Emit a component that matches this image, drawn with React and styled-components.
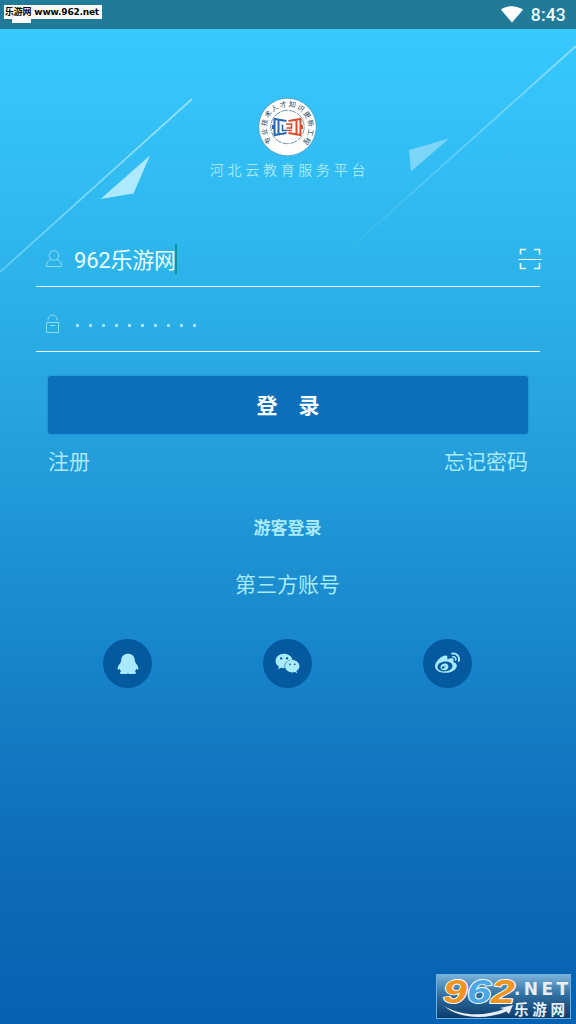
import styled, { createGlobalStyle, ThemeProvider } from "styled-components";
import { FaWeibo, FaWeixin } from "react-icons/fa";

const theme = {
  colors: {
    status: "#217a98",
    white: "#ffffff",
    text: "#e9fcff",
    pale: "#a9eaff",
    button: "#0b6fbb",
    circle: "#055a9f",
    cursor: "#07979b",
  },
  fonts: {
    main: 'Roboto, "Noto Sans CJK SC", sans-serif',
  },
};

const GlobalStyle = createGlobalStyle`
  * {
    box-sizing: border-box;
  }
  body {
    margin: 0;
    font-family: ${theme.fonts.main};
  }
`;

const Screen = styled.div`
  position: relative;
  display: flex;
  flex-direction: column;
  width: 576px;
  height: 1024px;
  overflow: hidden;
  background: linear-gradient(
    #38c9fe 29px,
    #2db5eb 260px,
    #249fdc 450px,
    #1784c9 660px,
    #0c6ab7 880px,
    #0562b3 1024px
  );
`;

const Decor = styled.svg`
  position: absolute;
  top: 0;
  left: 0;
  width: 576px;
  height: 300px;
  pointer-events: none;
`;

const StatusBar = styled.header`
  position: relative;
  display: flex;
  justify-content: flex-end;
  align-items: center;
  gap: 8px;
  height: 29px;
  padding-right: 10px;
  background-color: ${(p) => p.theme.colors.status};
`;

const Clock = styled.span`
  font-size: 17.5px;
  font-weight: 500;
  line-height: 29px;
  padding-top: 1px;
  letter-spacing: 0.2px;
  color: ${(p) => p.theme.colors.text};
`;

const SiteTag = styled.div`
  position: absolute;
  top: 5px;
  left: 4px;
  width: 98px;
  height: 14px;
  padding-left: 1px;
  background-color: ${(p) => p.theme.colors.white};
  color: #000;
  font: bold 9px/15px "DejaVu Sans", "Noto Sans CJK SC", sans-serif;
  letter-spacing: -0.2px;
  white-space: nowrap;
  &::after {
    content: "";
    position: absolute;
    top: 14px;
    left: 8px;
    width: 19px;
    height: 4px;
    background-color: ${(p) => p.theme.colors.white};
  }
`;

const Brand = styled.div`
  position: relative;
  display: flex;
  flex-direction: column;
  align-items: center;
  height: 204px;
  padding-top: 68px;
`;

const BrandName = styled.h1`
  margin: 3px 0 0 3px;
  font-size: 14px;
  font-weight: 350;
  line-height: 20px;
  letter-spacing: 3.7px;
  color: ${(p) => p.theme.colors.pale};
`;

const FieldRow = styled.div`
  position: relative;
  display: flex;
  align-items: center;
  height: ${(p) => p.$height}px;
  margin: 0 36px;
  padding: ${(p) => p.$shift || 0}px 0 0 9px;
  border-bottom: 1px solid ${(p) => p.theme.colors.text};
`;

const FieldIcon = styled.svg`
  flex: none;
  width: 18px;
  height: 20px;
  margin-bottom: 1px;
  fill: none;
  stroke: #8bdcf8;
  stroke-width: 1;
`;

const FieldText = styled.span`
  margin-left: 11px;
  padding-top: 2px;
  font-size: 22px;
  line-height: 30px;
  letter-spacing: -0.2px;
  color: ${(p) => p.theme.colors.text};
`;

const Cursor = styled.i`
  width: 2px;
  height: 30px;
  margin: 0 0 1px -1px;
  background-color: ${(p) => p.theme.colors.cursor};
`;

const Dots = styled.span`
  display: flex;
  gap: 10px;
  margin: 3px 0 0 13px;
`;

const Dot = styled.i`
  width: 3px;
  height: 3px;
  border-radius: 1px;
  background-color: ${(p) => p.theme.colors.pale};
`;

const ScanIcon = styled.svg`
  flex: none;
  width: 24px;
  height: 24px;
  margin: 0 -2px 2px auto;
  fill: none;
  stroke: ${(p) => p.theme.colors.text};
`;

const LoginBtn = styled.button`
  height: 58px;
  margin: 24px 48px 0;
  padding: 0 0 3px;
  border: none;
  border-radius: 3px;
  background-color: ${(p) => p.theme.colors.button};
  box-shadow: 0 0 2px rgba(0, 70, 120, 0.45);
  color: ${(p) => p.theme.colors.white};
  font-family: inherit;
  font-size: 21px;
  font-weight: 700;
`;

const Links = styled.div`
  display: flex;
  justify-content: space-between;
  margin: 13px 48px 0;
`;

const TextLink = styled.a`
  font-size: ${(p) => p.$size || 21}px;
  font-weight: ${(p) => (p.$bold ? 700 : 400)};
  line-height: 30px;
  color: ${(p) => p.theme.colors.pale};
`;

const Guest = styled.div`
  display: flex;
  flex-direction: column;
  align-items: center;
  gap: 27px;
  margin: 36px 1px 0 0;
`;

const Socials = styled.div`
  display: flex;
  justify-content: center;
  gap: 111px;
  margin: 39px 1px 0 0;
`;

const SocialBtn = styled.a`
  display: flex;
  justify-content: center;
  align-items: center;
  width: 49px;
  height: 49px;
  border-radius: 50%;
  background-color: ${(p) => p.theme.colors.circle};
  color: ${(p) => p.theme.colors.pale};
`;

const Watermark = styled.svg`
  position: absolute;
  right: 5px;
  bottom: 5px;
  width: 135px;
  height: 45px;
  overflow: visible;
`;

const Background = () => (
  <Decor viewBox="0 0 576 300">
    <defs>
      <linearGradient id="lineL" gradientUnits="userSpaceOnUse" x1="0" y1="272" x2="192" y2="99">
        <stop offset="0" stopColor="#9fe6ff" stopOpacity="0.45" />
        <stop offset="1" stopColor="#9fe6ff" stopOpacity="0.9" />
      </linearGradient>
      <linearGradient id="lineR" gradientUnits="userSpaceOnUse" x1="345" y1="253" x2="576" y2="46">
        <stop offset="0" stopColor="#9fe6ff" stopOpacity="0" />
        <stop offset="1" stopColor="#9fe6ff" stopOpacity="0.8" />
      </linearGradient>
    </defs>
    <path d="M0 272 192 99" stroke="url(#lineL)" strokeWidth="1.700" />
    <path d="M345 253 576 46" stroke="url(#lineR)" strokeWidth="1.700" />
    <path d="M150 155.500 100.500 199 133.500 193.500Z" fill="#aeeaff" />
    <path d="M449 138.500 409 150 411 171.500Z" fill="#7dd5f8" />
  </Decor>
);

const Emblem = () => (
  <svg width="60" height="60" viewBox="0 0 60 60">
    <defs>
      <path id="ring" d="M14 44.800A21 21 0 1 1 45 44.800" />
    </defs>
    <circle cx="29.500" cy="30" r="28.800" fill="#fff" stroke="#4c9ac2" strokeWidth="0.800" />
    <circle cx="29.500" cy="30" r="16.700" fill="none" stroke="#5d8ba5" strokeWidth="0.900" strokeDasharray="7 1" />
    <text fontSize="7" fill="#26465c" fontFamily='"Noto Sans CJK SC", sans-serif'>
      <textPath href="#ring" textLength="97">专业技术人才知识更新工程</textPath>
    </text>
    <path d="M15 21H44V39H15Z" fill="#fff" />
    <g fill="none" strokeWidth="2">
      <path d="M28.500 24 16.500 22V38L28.500 36M20.500 23V37" stroke="#2866ad" />
      <path d="M30.500 24 42.500 22V38L30.500 36M38.500 23V37" stroke="#d64c2c" />
      <path d="M14 30H16" stroke="#2866ad" strokeWidth="4" />
      <path d="M43 30H45" stroke="#d64c2c" strokeWidth="4" />
      <path d="M24.500 27.500V33.500H29.500" stroke="#2866ad" strokeWidth="1.600" />
      <path d="M28 27H33.500V31H28.500M29.500 33.500H34" stroke="#d64c2c" strokeWidth="1.600" />
    </g>
  </svg>
);

const WifiIcon = () => (
  <svg width="22" height="17" viewBox="0 0 22 17">
    <path d="M0 3.700C6.500-1 15.500-1 22 3.700L11 16.500Z" fill="#fff" />
  </svg>
);

const QqIcon = () => (
  <svg width="22" height="22" viewBox="0 0 22 22" fill="currentColor">
    <path d="M11 .8C7 .8 4.300 3.500 4.300 7.200 4 8 3.700 8.900 3.500 9.700 2 11.500.4 14 .6 16.100c.2 1 1.100.7 2.200-.4.200 1 .7 1.900 1.300 2.500-1 .5-1.500 1.800-.4 2.900H9.500L11 20.500 12.500 21.100H18.300c1.100-1.100.6-2.400-.4-2.900.6-.6 1.100-1.500 1.300-2.500 1.100 1.100 2 1.400 2.200.4.200-2.100-1.400-4.600-2.900-6.400-.2-.8-.5-1.700-.8-2.500C17.700 3.500 15 .8 11 .8Z" />
  </svg>
);

const SiteLogo = () => (
  <Watermark viewBox="0 0 135 45">
    <defs>
      <linearGradient id="plate" x1="0" y1="0" x2="0" y2="1">
        <stop offset="0" stopColor="#79b3dc" />
        <stop offset="0.5" stopColor="#2d6b9c" />
        <stop offset="1" stopColor="#0b3c6c" />
      </linearGradient>
    </defs>
    <rect x="0.500" y="0.500" width="134" height="44" fill="url(#plate)" stroke="#71b0df" />
    <g
      fontFamily='"Liberation Sans", sans-serif'
      fontSize="34"
      fontWeight="bold"
      fontStyle="italic"
      stroke="#fff"
      strokeWidth="1.800"
      strokeLinejoin="round"
      paintOrder="stroke"
    >
      <text x="7" y="28.500" fill="#f29422" textLength="24" lengthAdjust="spacingAndGlyphs">9</text>
      <text x="31" y="28.500" fill="#4ba8e4" textLength="24" lengthAdjust="spacingAndGlyphs">6</text>
      <text x="55" y="28.500" fill="#f29422" textLength="24" lengthAdjust="spacingAndGlyphs">2</text>
    </g>
    <path d="M8 32C27 43 50 42 68 35L64 34 77 31 73 40 70.500 37.500C50 46 23 45 8 32Z" fill="#e6edf5" />
    <g fill="#e9eef5" fontWeight="bold">
      <text x="78" y="21" fontSize="17" fontFamily='"DejaVu Sans", sans-serif' textLength="54">.NET</text>
      <text x="78" y="40.500" fontSize="14.500" fontFamily='"Noto Sans CJK SC", sans-serif' textLength="51">乐游网</text>
    </g>
  </Watermark>
);

const App = () => {
  return (
    <ThemeProvider theme={theme}>
      <GlobalStyle />
      <Screen>
        <Background />
        <StatusBar>
          <SiteTag>乐游网 www.962.net</SiteTag>
          <WifiIcon />
          <Clock>8:43</Clock>
        </StatusBar>
        <Brand>
          <Emblem />
          <BrandName>河北云教育服务平台</BrandName>
        </Brand>
        <FieldRow $height={54}>
          <FieldIcon viewBox="0 0 18 20">
            <circle cx="9" cy="6.500" r="4.800" />
            <path d="M6 10.500C3 11.500 1.200 14 1.500 17.500H16.500C16.800 14 15 11.500 12 10.500" />
          </FieldIcon>
          <FieldText>962乐游网</FieldText>
          <Cursor />
          <ScanIcon viewBox="0 0 24 24">
            <path d="M2.500 7.500V2.500H8M16 2.500H21.500V7.500M2.500 16V21.500H8M16 21.500H21.500V16" strokeWidth="1.600" />
            <path d="M.5 12.500H23.500" />
          </ScanIcon>
        </FieldRow>
        <FieldRow $height={65} $shift={10}>
          <FieldIcon viewBox="0 0 18 20">
            <path d="M1.500 8.500H13.500V18.500H1.500ZM5 11.500H10" />
            <path d="M3 6.500V5.500A4.500 4.500 0 0 1 12 5.500V6.500" />
          </FieldIcon>
          <Dots>
            {Array.from({ length: 10 }, (_, i) => (
              <Dot key={i} />
            ))}
          </Dots>
        </FieldRow>
        <LoginBtn>登　录</LoginBtn>
        <Links>
          <TextLink>注册</TextLink>
          <TextLink>忘记密码</TextLink>
        </Links>
        <Guest>
          <TextLink $size={17} $bold>
            游客登录
          </TextLink>
          <TextLink>第三方账号</TextLink>
        </Guest>
        <Socials>
          <SocialBtn>
            <QqIcon />
          </SocialBtn>
          <SocialBtn>
            <FaWeixin size={25} />
          </SocialBtn>
          <SocialBtn>
            <FaWeibo size={25} />
          </SocialBtn>
        </Socials>
        <SiteLogo />
      </Screen>
    </ThemeProvider>
  );
};

export default App;
